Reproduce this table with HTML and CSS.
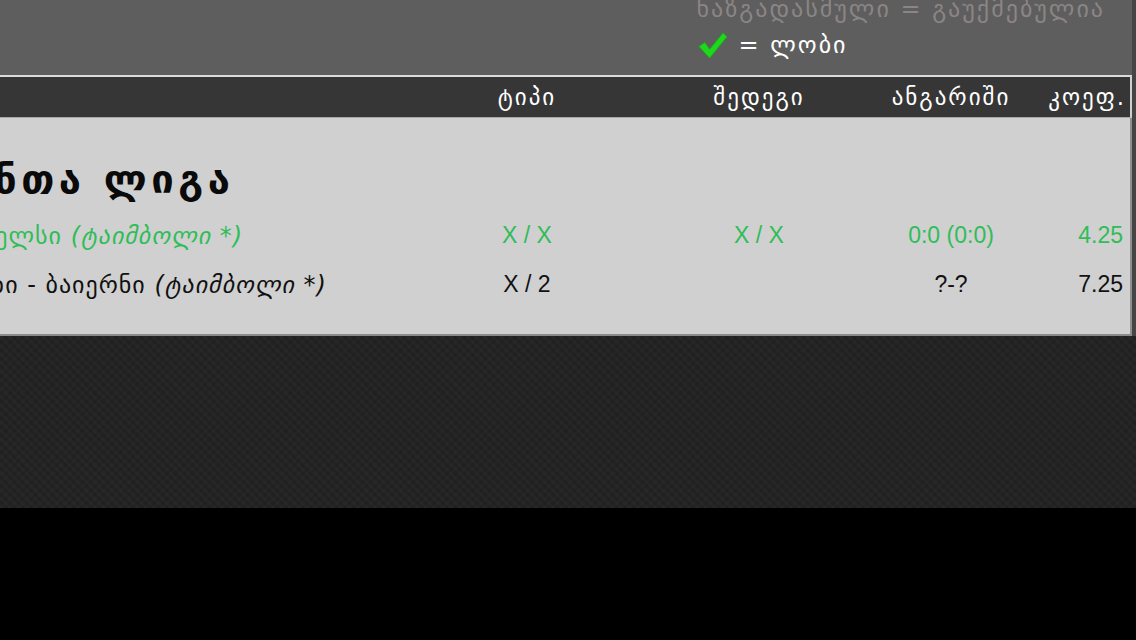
FILE: index.html
```html
<!DOCTYPE html>
<html lang="ka">
<head>
<meta charset="utf-8">
<title>ფსონები</title>
<link rel="stylesheet" href="styles.css">
</head>
<body>
<div class="screen">
  <div class="frame">
    <div class="sheet">
      <div class="legend-area">
        <div class="legend">
          <div class="legend-line legend-strike">ხაზგადასმული = გაუქმებულია</div>
          <div class="legend-line legend-win">
            <svg class="check" viewBox="0 0 32 28" width="31" height="27" aria-hidden="true">
              <path d="M2 15 L8 11 L13 18 L27 1 L31 5 L13 27 Z" fill="#1ed81e" stroke="#17b317" stroke-width="1" stroke-linejoin="round"/>
            </svg>
            <span>= ლობი</span>
          </div>
        </div>
      </div>
      <div class="head-row">
        <div class="cell cell-name"></div>
        <div class="cell cell-type"><span>ტიპი</span></div>
        <div class="cell cell-result"><span>შედეგი</span></div>
        <div class="cell cell-score"><span>ანგარიში</span></div>
        <div class="cell cell-coef"><span>კოეფ.</span></div>
      </div>
      <div class="panel">
        <h2 class="league">ჩემპიონთა ლიგა</h2>
        <div class="bet-row bet-won">
          <div class="cell cell-name"><span>ატლეტიკო - ჩელსი <i>(ტაიმბოლი *)</i></span></div>
          <div class="cell cell-type num"><span>X / X</span></div>
          <div class="cell cell-result num"><span>X / X</span></div>
          <div class="cell cell-score num"><span>0:0 (0:0)</span></div>
          <div class="cell cell-coef num"><span>4.25</span></div>
        </div>
        <div class="bet-row">
          <div class="cell cell-name"><span>რეალ მადრიდი - ბაიერნი <i>(ტაიმბოლი *)</i></span></div>
          <div class="cell cell-type num"><span>X / 2</span></div>
          <div class="cell cell-result num"></div>
          <div class="cell cell-score num"><span>?-?</span></div>
          <div class="cell cell-coef num"><span>7.25</span></div>
        </div>
      </div>
    </div>
  </div>
</div>
</body>
</html>
```
FILE: styles.css
```css
html, body {
  margin: 0;
  padding: 0;
  background: #000;
}
body {
  width: 1136px;
  height: 640px;
  overflow: hidden;
  font-family: "DejaVu Sans", sans-serif;
}
.screen {
  height: 508px;
  background-color: #232323;
  background-image:
    repeating-linear-gradient(45deg, rgba(255,255,255,0.018) 0 3px, transparent 3px 6px),
    repeating-linear-gradient(-45deg, rgba(0,0,0,0.08) 0 3px, transparent 3px 6px);
  overflow: hidden;
}
.frame {
  background: #454545;
  width: 1136px;
}
.sheet {
  width: 1432px;
  margin-left: -300px;
}
.legend-area {
  height: 75px;
  background: #5e5e5e;
  display: flex;
  justify-content: flex-end;
  padding-right: 27px;
  box-sizing: border-box;
  width: 1432px;
}
.legend {
  display: flex;
  flex-direction: column;
  margin-top: -6px;
}
.legend-line {
  font-size: 24px;
  letter-spacing: 2px;
  line-height: 30px;
  height: 34px;
  white-space: nowrap;
}
.legend-strike {
  color: #8b8585;
}
.legend-win {
  display: flex;
  align-items: center;
  gap: 11px;
  color: #fff;
}
.check {
  display: block;
}
.head-row, .bet-row {
  display: grid;
  grid-template-columns: 1fr 174px 290px 94px 132px;
  align-items: center;
}
.head-row {
  height: 40px;
  background: #363636;
  border-top: 2px solid #dcdcdc;
  border-right: 2px solid #cfcfcf;
  border-bottom: 1px solid #a8a8a8;
  color: #fff;
  font-size: 23px;
  letter-spacing: 2px;
}
.cell {
  display: flex;
  justify-content: center;
  white-space: nowrap;
}
.cell-coef {
  justify-content: flex-end;
  padding-right: 7px;
}
.head-row .cell-coef {
  padding-right: 4px;
}
.panel {
  background: #d0d0d0;
  border-right: 2px solid #8f8f8f;
  border-bottom: 2px solid #8a8a8a;
  height: 218px;
  box-sizing: border-box;
  padding-top: 38px;
}
.league {
  margin: 0 0 9px;
  padding-left: 122px;
  font-size: 40px;
  letter-spacing: 4.5px;
  line-height: 46px;
  font-weight: bold;
  color: #0a0a0a;
  white-space: nowrap;
}
.bet-row {
  height: 49px;
  color: #111;
  font-size: 24px;
  letter-spacing: 1px;
}
.bet-row .cell-name {
  justify-content: flex-start;
  padding-left: 122px;
}
.bet-won {
  color: #2fbd58;
}
.num {
  font-family: "Liberation Sans", Arial, sans-serif;
  font-size: 23px;
  letter-spacing: 0;
}
```
